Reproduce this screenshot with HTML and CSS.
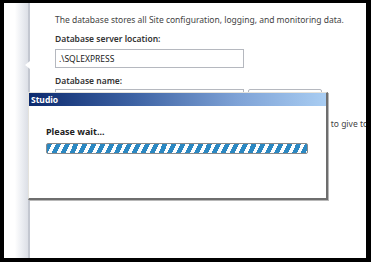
FILE: index.html
```html
<!DOCTYPE html>
<html lang="en">
<head>
    <meta charset="UTF-8">
    <title>Studio - Please wait</title>
    <link rel="stylesheet" href="styles.css">
</head>
<body>
    <div class="screen">
        <aside class="nav">
            <span class="nav-pointer"></span>
        </aside>
        <main class="page">
            <p class="intro">The database stores all Site configuration, logging, and monitoring data.</p>
            <div class="field-label">Database server location:</div>
            <div class="textbox">.\SQLEXPRESS</div>
            <div class="field-label">Database name:</div>
            <div class="field-row">
                <div class="textbox"></div>
                <div class="side-button"></div>
            </div>
            <!-- the start of this line sits under the dialog -->
            <p class="note"><span class="covered">Enter a name for the new database, or an existing one that you wan</span>t to give to</p>
        </main>

        <div class="dialog">
            <div class="dialog-title">Studio</div>
            <div class="dialog-body">
                <div class="wait-text">Please wait...</div>
                <div class="progress"></div>
            </div>
        </div>
    </div>
</body>
</html>
```

FILE: styles.css
```css
html, body {
    margin: 0;
    height: 100%;
    background: #000;
}
body {
    font-family: "Noto Sans", "Open Sans", sans-serif;
    font-size: 8.5px;
    color: #444;
}
.screen {
    position: relative;
    display: flex;
    height: 255px;
    margin: 3px 5px 4px 4px;
    background: #fff;
    overflow: hidden;
}
.nav {
    position: relative;
    flex: 0 0 24px;
    background: linear-gradient(to right, #fff 0, #fff 45%, #eef0f4 70%, #dcdfe6 100%);
    border-right: 2px solid #c3c7d0;
}
.nav-pointer {
    position: absolute;
    right: -2px;
    top: 58px;
    width: 0;
    height: 0;
    border-top: 4px solid transparent;
    border-bottom: 4px solid transparent;
    border-right: 5px solid #fff;
}
.page {
    flex: 1;
    padding: 11px 0 0 25px;
    white-space: nowrap;
}
.intro {
    margin: 0;
    line-height: 12px;
}
.field-label {
    margin-top: 7px;
    line-height: 12px;
    font-weight: 600;
    color: #333;
}
.textbox {
    box-sizing: border-box;
    width: 189px;
    height: 19px;
    margin-top: 4px;
    padding: 0 3px;
    border: 1px solid #b5b8bf;
    line-height: 17px;
    color: #222;
}
.field-row {
    display: flex;
    gap: 4px;
}
.field-row .textbox,
.side-button {
    margin-top: 2px;
}
.side-button {
    box-sizing: border-box;
    width: 74px;
    height: 19px;
    border: 1px solid #b5b8bf;
    border-radius: 2px;
}
.note {
    margin: 10px 0 0;
    line-height: 12px;
}
.covered {
    visibility: hidden;
}
.dialog {
    position: absolute;
    left: 24px;
    top: 89px;
    width: 297px;
    height: 105px;
    background: #fff;
    border-left: 1px solid #e4e2dc;
    border-top: 1px solid #e4e2dc;
    border-right: 2px solid #6e6e6e;
    border-bottom: 2px solid #6e6e6e;
    box-shadow: 1px 1px 0 #b8b8b8;
}
.dialog-title {
    height: 13px;
    padding-left: 2px;
    line-height: 13px;
    font-weight: 700;
    color: #fff;
    background: linear-gradient(to right, #0c2a6e 0, #3d62a3 35%, #7ea2d6 70%, #a9cdf2 100%);
}
.dialog-body {
    padding: 20px 17px 0 17px;
}
.wait-text {
    font-size: 9px;
    font-weight: 700;
    line-height: 12px;
    color: #222;
}
.progress {
    box-sizing: border-box;
    width: 262px;
    height: 11px;
    margin-top: 5px;
    border: 1px solid #8a8a8a;
    border-radius: 2px;
    background: repeating-linear-gradient(116deg, #2b88c2 0, #2b88c2 4.5px, #fff 4.5px, #fff 8px);
}
```
